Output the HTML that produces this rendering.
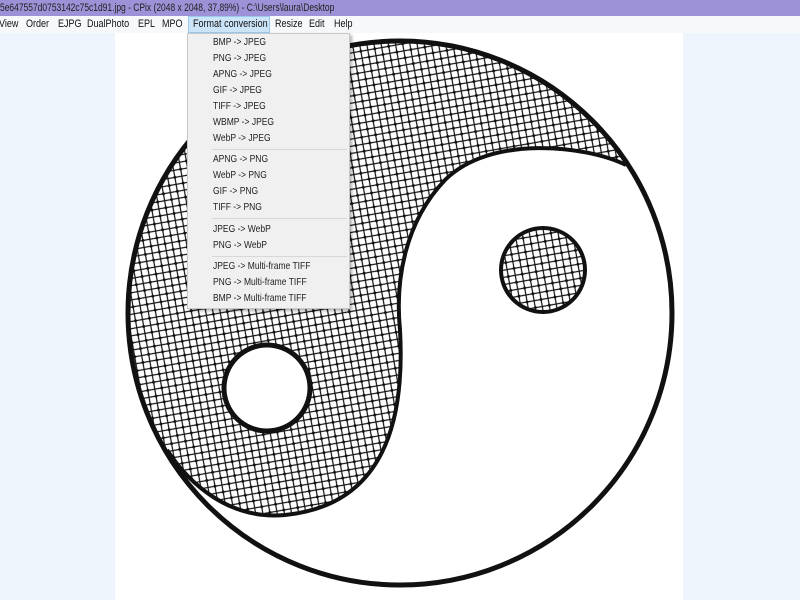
<!DOCTYPE html>
<html><head><meta charset="utf-8"><style>
*{margin:0;padding:0;box-sizing:border-box}
body{width:800px;height:600px;overflow:hidden;background:#eef5fc;font-family:"Liberation Sans",sans-serif;position:relative}
#title{position:absolute;left:0;top:0;width:800px;height:16px;background:#9d92d8;color:#222;font-size:11px;line-height:16px;white-space:nowrap}
#title span{display:inline-block;transform:scaleX(.77);transform-origin:left center}
#menubar{position:absolute;left:0;top:16px;width:800px;height:17px;background:#f7f8fa;font-size:11px;line-height:17px;color:#111}
#menubar span{position:absolute;top:0;white-space:nowrap}
#menubar span b{font-weight:normal;display:inline-block;transform:scaleX(.82);transform-origin:left center}
#img{position:absolute;left:115px;top:33px;width:568px;height:567px;background:#fff}
#menu{position:absolute;left:187px;top:33px;width:163px;height:276px;background:#f0f0f0;border:1px solid #c8c8c8;box-shadow:2px 2px 3px rgba(0,0,0,.3);font-size:10.5px;color:#222}
#menu div.i{position:absolute;left:25px;height:16px;line-height:16px;white-space:nowrap;transform:scaleX(.81);transform-origin:left center}
#menu div.s{position:absolute;left:24px;right:2px;height:1px;background:#d8d8d8}
</style></head><body>
<div id="title"><span>5e647557d0753142c75c1d91.jpg - CPix (2048 x 2048, 37,89%) - C:\Users\laura\Desktop</span></div>
<div id="menubar">
<span style="left:-1px"><b>View</b></span><span style="left:26px"><b>Order</b></span><span style="left:58px"><b>EJPG</b></span><span style="left:87px"><b>DualPhoto</b></span><span style="left:138px"><b>EPL</b></span><span style="left:162px"><b>MPO</b></span>
<span style="left:188px;width:82px;height:17px;background:#cce4f7;border:1px solid #99c9ef;padding-left:4px;line-height:15px"><b>Format conversion</b></span>
<span style="left:275px"><b>Resize</b></span><span style="left:309px"><b>Edit</b></span><span style="left:334px"><b>Help</b></span>
</div>
<div id="img"></div>
<svg style="position:absolute;left:0;top:0" width="800" height="600">
<defs>
<pattern id="p" width="10" height="10" patternUnits="userSpaceOnUse" patternTransform="rotate(35)">
<rect width="10" height="10" fill="#fff"/>
<path d="M0,0L10,10M10,0L0,10" stroke="#111" stroke-width="1.2"/>
<circle cx="5" cy="5" r="1.5" fill="#111"/>
</pattern>
</defs>
<circle cx="400" cy="313" r="272" fill="url(#p)"/>
<path d="M626,165 C585,145 490,135 445,180 C405,222 395,280 400,330 C405,420 385,505 285,515 C230,520 190,485 167,450 A271,271 0 1 0 626,165 Z" fill="#fff"/>
<path d="M626,165 C585,145 490,135 445,180 C405,222 395,280 400,330 C405,420 385,505 285,515 C230,520 190,485 167,450" fill="none" stroke="#111" stroke-width="4"/>
<circle cx="400" cy="313" r="272" fill="none" stroke="#111" stroke-width="5"/>
<circle cx="543" cy="270" r="42" fill="url(#p)" stroke="#111" stroke-width="4"/>
<circle cx="267" cy="388" r="43" fill="#fff" stroke="#111" stroke-width="5"/>
</svg>
<div id="menu">
<div class="i" style="top:0px">BMP -&gt; JPEG</div>
<div class="i" style="top:16px">PNG -&gt; JPEG</div>
<div class="i" style="top:32px">APNG -&gt; JPEG</div>
<div class="i" style="top:48px">GIF -&gt; JPEG</div>
<div class="i" style="top:64px">TIFF -&gt; JPEG</div>
<div class="i" style="top:80px">WBMP -&gt; JPEG</div>
<div class="i" style="top:96px">WebP -&gt; JPEG</div>
<div class="s" style="top:115px"></div>
<div class="i" style="top:117px">APNG -&gt; PNG</div>
<div class="i" style="top:133px">WebP -&gt; PNG</div>
<div class="i" style="top:149px">GIF -&gt; PNG</div>
<div class="i" style="top:165px">TIFF -&gt; PNG</div>
<div class="s" style="top:184px"></div>
<div class="i" style="top:187px">JPEG -&gt; WebP</div>
<div class="i" style="top:203px">PNG -&gt; WebP</div>
<div class="s" style="top:222px"></div>
<div class="i" style="top:224px">JPEG -&gt; Multi-frame TIFF</div>
<div class="i" style="top:240px">PNG -&gt; Multi-frame TIFF</div>
<div class="i" style="top:256px">BMP -&gt; Multi-frame TIFF</div>
</div>
</body></html>
